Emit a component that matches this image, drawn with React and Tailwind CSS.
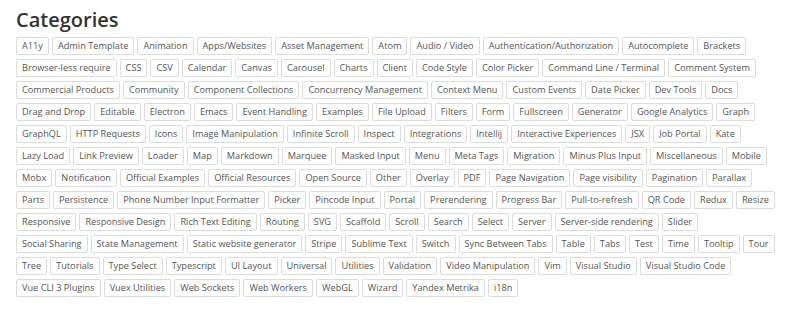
const rows = [
  ['A11y', 'Admin Template', 'Animation', 'Apps/Websites', 'Asset Management', 'Atom', 'Audio / Video', 'Authentication/Authorization', 'Autocomplete', 'Brackets'],
  ['Browser-less require', 'CSS', 'CSV', 'Calendar', 'Canvas', 'Carousel', 'Charts', 'Client', 'Code Style', 'Color Picker', 'Command Line / Terminal', 'Comment System'],
  ['Commercial Products', 'Community', 'Component Collections', 'Concurrency Management', 'Context Menu', 'Custom Events', 'Date Picker', 'Dev Tools', 'Docs'],
  ['Drag and Drop', 'Editable', 'Electron', 'Emacs', 'Event Handling', 'Examples', 'File Upload', 'Filters', 'Form', 'Fullscreen', 'Generator', 'Google Analytics', 'Graph'],
  ['GraphQL', 'HTTP Requests', 'Icons', 'Image Manipulation', 'Infinite Scroll', 'Inspect', 'Integrations', 'Intellij', 'Interactive Experiences', 'JSX', 'Job Portal', 'Kate'],
  ['Lazy Load', 'Link Preview', 'Loader', 'Map', 'Markdown', 'Marquee', 'Masked Input', 'Menu', 'Meta Tags', 'Migration', 'Minus Plus Input', 'Miscellaneous', 'Mobile'],
  ['Mobx', 'Notification', 'Official Examples', 'Official Resources', 'Open Source', 'Other', 'Overlay', 'PDF', 'Page Navigation', 'Page visibility', 'Pagination', 'Parallax'],
  ['Parts', 'Persistence', 'Phone Number Input Formatter', 'Picker', 'Pincode Input', 'Portal', 'Prerendering', 'Progress Bar', 'Pull-to-refresh', 'QR Code', 'Redux', 'Resize'],
  ['Responsive', 'Responsive Design', 'Rich Text Editing', 'Routing', 'SVG', 'Scaffold', 'Scroll', 'Search', 'Select', 'Server', 'Server-side rendering', 'Slider'],
  ['Social Sharing', 'State Management', 'Static website generator', 'Stripe', 'Sublime Text', 'Switch', 'Sync Between Tabs', 'Table', 'Tabs', 'Test', 'Time', 'Tooltip', 'Tour'],
  ['Tree', 'Tutorials', 'Type Select', 'Typescript', 'UI Layout', 'Universal', 'Utilities', 'Validation', 'Video Manipulation', 'Vim', 'Visual Studio', 'Visual Studio Code'],
  ['Vue CLI 3 Plugins', 'Vuex Utilities', 'Web Sockets', 'Web Workers', 'WebGL', 'Wizard', 'Yandex Metrika', 'i18n'],
];

export default function App() {
  return (
    <div className="min-h-[316px] bg-white px-4 pt-[7px] font-['Open_Sans',sans-serif]">
      <h1 className="text-[20px] font-semibold leading-[26px] text-[#333]">Categories</h1>
      <div className="mt-[4px] flex flex-col gap-[4px]">
        {rows.map((row, i) => (
          <div key={i} className="flex gap-[3px]">
            {row.map((tag) => (
              <span
                key={tag}
                className="flex h-[18px] items-center rounded-[2px] border border-[#dcdcdc] bg-white px-[5px] text-[9.2px] whitespace-nowrap text-[#555]"
              >
                {tag}
              </span>
            ))}
          </div>
        ))}
      </div>
    </div>
  );
}
